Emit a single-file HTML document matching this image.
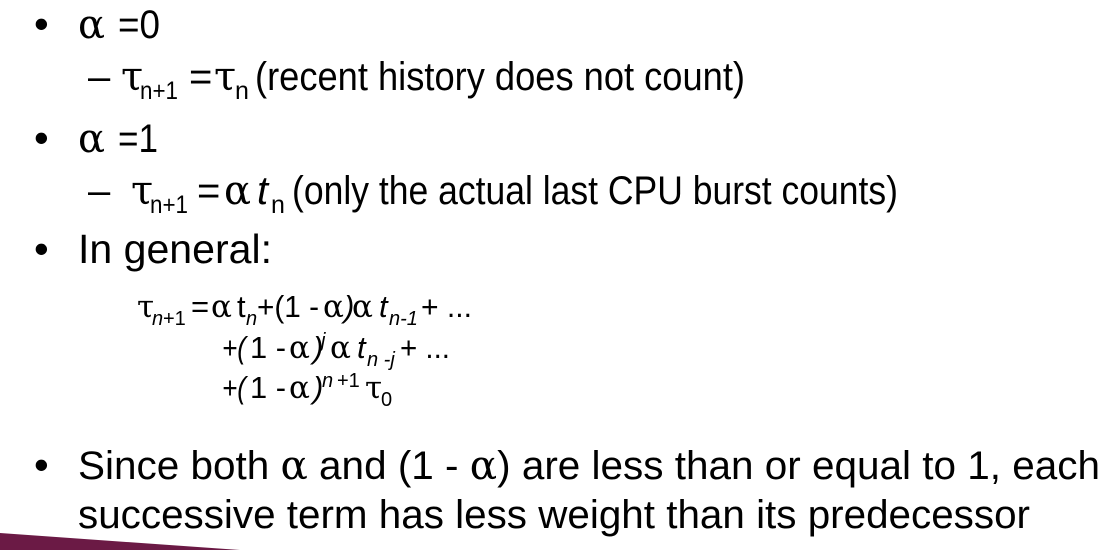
<!DOCTYPE html>
<html><head><style>
html,body{margin:0;padding:0;background:#fff;}
svg{display:block;}
text{font-family:"Liberation Sans","DejaVu Sans",sans-serif;fill:#000;}
.s{font-family:"DejaVu Serif","Liberation Serif",serif;}
</style></head><body>
<svg width="1104" height="550" viewBox="0 0 1104 550" xmlns="http://www.w3.org/2000/svg">
<polygon points="0,533 240,550 0,550" fill="#6b1a45"/>
<g font-size="42">
<text x="34" y="38">•</text>
<text x="34" y="152">•</text>
<text x="34" y="263">•</text>
<text x="34" y="479">•</text>
</g>
<text x="78" y="38" font-size="40" class="s">α</text>
<text x="118" y="38" font-size="40" textLength="42" lengthAdjust="spacingAndGlyphs">=0</text>

<text x="88" y="90" font-size="40">–</text>
<text x="121" y="90" font-size="40" class="s">τ</text>
<text x="140" y="99" font-size="25" textLength="38" lengthAdjust="spacingAndGlyphs">n+1</text>
<text x="189" y="90" font-size="40">=</text>
<text x="214" y="90" font-size="40" class="s">τ</text>
<text x="235" y="99" font-size="25">n</text>
<text x="255" y="90" font-size="40" textLength="490" lengthAdjust="spacingAndGlyphs">(recent history does not count)</text>

<text x="78" y="152" font-size="40" class="s">α</text>
<text x="118" y="152" font-size="40" textLength="40" lengthAdjust="spacingAndGlyphs">=1</text>

<text x="88" y="204" font-size="40">–</text>
<text x="131" y="204" font-size="40" class="s">τ</text>
<text x="150" y="213" font-size="25" textLength="38" lengthAdjust="spacingAndGlyphs">n+1</text>
<text x="197" y="204" font-size="40">=</text>
<text x="224" y="204" font-size="40" class="s">α</text>
<text x="257" y="204" font-size="40" font-style="italic">t</text>
<text x="271" y="213" font-size="25">n</text>
<text x="292" y="204" font-size="40" textLength="606" lengthAdjust="spacingAndGlyphs">(only the actual last CPU burst counts)</text>

<text x="78" y="263" font-size="41" textLength="194" lengthAdjust="spacingAndGlyphs">In general:</text>

<g font-size="31">
<text x="137" y="317" class="s">τ</text>
<text x="152" y="325" font-size="20" font-style="italic">n</text><text x="163" y="325" font-size="20">+1</text>
<text x="191" y="317">=</text>
<text x="211" y="317" class="s">α</text>
<text x="237" y="317">t</text>
<text x="246" y="325" font-size="20" font-style="italic">n</text>
<text x="257" y="317" textLength="62" lengthAdjust="spacingAndGlyphs">+(1 -</text>
<text x="323" y="317" class="s">α</text>
<text x="344" y="317" font-style="italic">)</text>
<text x="352" y="317" class="s">α</text>
<text x="379" y="317" font-style="italic">t</text>
<text x="389" y="325" font-size="20" font-style="italic">n-1</text>
<text x="421" y="317" textLength="51" lengthAdjust="spacingAndGlyphs">+ ...</text>

<text x="222" y="358" font-style="italic" textLength="24" lengthAdjust="spacingAndGlyphs">+(</text>
<text x="250" y="358" textLength="36" lengthAdjust="spacingAndGlyphs">1 -</text>
<text x="289" y="358" class="s">α</text>
<text x="313" y="358" font-style="italic">)</text>
<text x="321" y="347" font-size="20" font-style="italic">j</text>
<text x="330" y="358" class="s">α</text>
<text x="357" y="358" font-style="italic">t</text>
<text x="367" y="366" font-size="20" font-style="italic">n -j</text>
<text x="400" y="358" textLength="50" lengthAdjust="spacingAndGlyphs">+ ...</text>

<text x="222" y="398" font-style="italic" textLength="24" lengthAdjust="spacingAndGlyphs">+(</text>
<text x="250" y="398" textLength="36" lengthAdjust="spacingAndGlyphs">1 -</text>
<text x="289" y="398" class="s">α</text>
<text x="313" y="398" font-style="italic">)</text>
<text x="322" y="387" font-size="20" font-style="italic">n</text><text x="337" y="387" font-size="20">+1</text>
<text x="365" y="398" class="s">τ</text>
<text x="381" y="406" font-size="20">0</text>
</g>

<text x="78" y="479" font-size="40" textLength="1022" lengthAdjust="spacingAndGlyphs">Since both <tspan class="s">α</tspan> and (1 - <tspan class="s">α</tspan>) are less than or equal to 1, each</text>
<text x="78" y="528" font-size="40" textLength="952" lengthAdjust="spacingAndGlyphs">successive term has less weight than its predecessor</text>
</svg>
</body></html>
